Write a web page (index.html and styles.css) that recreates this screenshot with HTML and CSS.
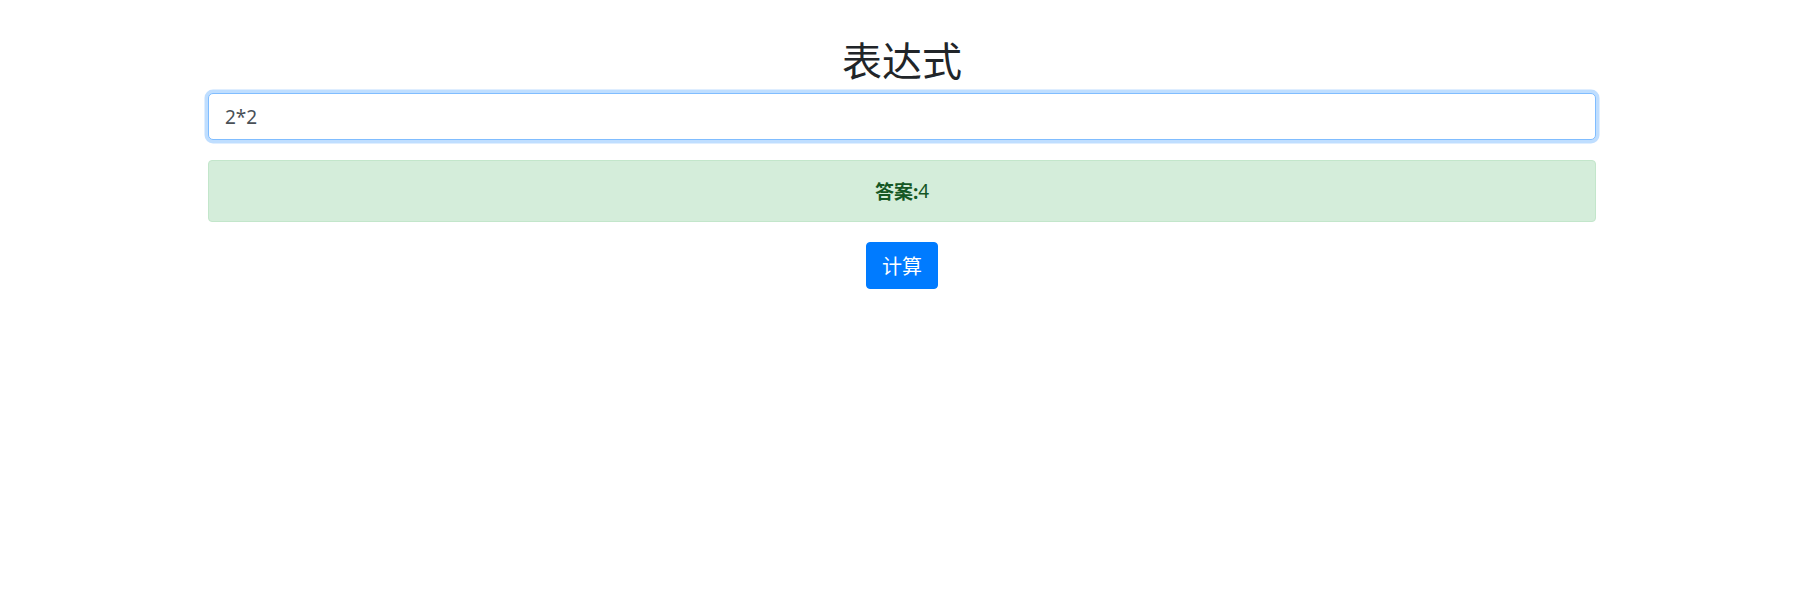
FILE: index.html
```html
<!DOCTYPE html>
<html lang="zh-CN">
<head>
<meta charset="utf-8">
<title>表达式</title>
<link rel="stylesheet" href="styles.css">
</head>
<body>
<div class="container">
  <h1 class="title">表达式</h1>
  <input class="expr-input" type="text" value="2*2" autofocus>
  <div class="alert-success"><strong>答案:</strong>4</div>
  <div class="actions">
    <button class="btn-primary" type="button">计算</button>
  </div>
</div>
</body>
</html>
```
FILE: styles.css
```css
html, body {
  margin: 0;
  padding: 0;
  background: #fff;
}
body {
  font-family: "Noto Sans", "Noto Sans CJK SC", sans-serif;
  color: #212529;
}
.container {
  width: 1388px;
  margin: 0 206px 0 auto;
  padding-top: 35px;
  display: flex;
  flex-direction: column;
}
.title {
  margin: 0 0 10px;
  font-family: "Noto Sans CJK SC", sans-serif;
  font-weight: 400;
  font-size: 40px;
  line-height: 48px;
  text-align: center;
  color: #212529;
}
.expr-input {
  box-sizing: border-box;
  width: 100%;
  height: 47px;
  margin: 0;
  padding: 0 16px;
  font-family: "Noto Sans", "Noto Sans CJK SC", sans-serif;
  font-size: 19px;
  color: #495057;
  background: #fff;
  border: 1px solid #80bdff;
  border-radius: 5px;
  outline: none;
  box-shadow: 0 0 0 3.5px rgba(0, 123, 255, 0.25);
}
.alert-success {
  box-sizing: border-box;
  margin-top: 20px;
  height: 62px;
  display: flex;
  align-items: center;
  justify-content: center;
  background: #d4edda;
  border: 1px solid #c3e6cb;
  border-radius: 4px;
  color: #155724;
  font-size: 19px;
  font-family: "Noto Sans", "Noto Sans CJK SC", sans-serif;
}
.alert-success strong {
  font-weight: 700;
}
.actions {
  margin-top: 20px;
  display: flex;
  justify-content: center;
}
.btn-primary {
  box-sizing: border-box;
  height: 47px;
  width: 72px;
  padding: 0;
  font-family: "Noto Sans CJK SC", sans-serif;
  font-size: 20px;
  color: #fff;
  background: #007bff;
  border: 1px solid #007bff;
  border-radius: 4px;
  cursor: pointer;
}
```
